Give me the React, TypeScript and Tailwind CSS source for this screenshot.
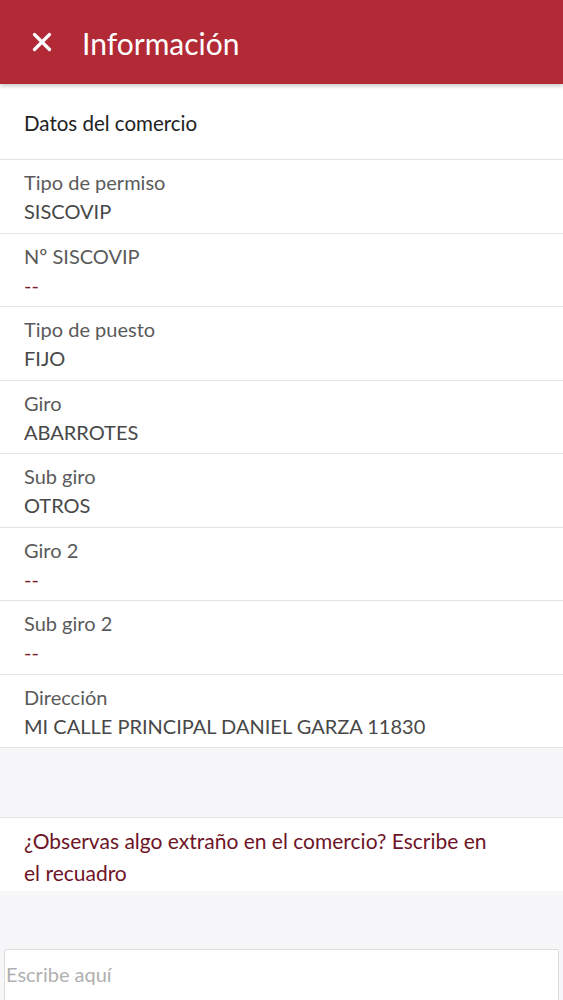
import { X } from "lucide-react";

const rows = [
  { label: "Tipo de permiso", value: "SISCOVIP" },
  { label: "Nº SISCOVIP", value: "--" },
  { label: "Tipo de puesto", value: "FIJO" },
  { label: "Giro", value: "ABARROTES" },
  { label: "Sub giro", value: "OTROS" },
  { label: "Giro 2", value: "--" },
  { label: "Sub giro 2", value: "--" },
  { label: "Dirección", value: "MI CALLE PRINCIPAL DANIEL GARZA 11830" },
];

export default function App() {
  return (
    <div className="w-[563px] h-[1000px] overflow-hidden bg-[#f7f7f9] font-['Lato',sans-serif]">
      {/* Header */}
      <div className="relative z-10 h-[84px] bg-[#b12a36] flex items-center shadow-[0_2px_4px_rgba(0,0,0,0.22)]">
        <X className="ml-[27px] w-[30px] h-[30px] text-white" strokeWidth={2.6} />
        <h1 className="ml-[25px] pt-[2px] text-[30px] text-white">Información</h1>
      </div>

      {/* Section title */}
      <div className="bg-white h-[76px] flex items-center px-6 pt-[4px] border-b border-[#e4e4e6]">
        <p className="text-[20.5px] text-[#222]">Datos del comercio</p>
      </div>

      {/* Rows */}
      <div className="bg-white">
        {rows.map((r) => (
          <div key={r.label} className="h-[73.5px] px-6 pt-[8px] border-b border-[#e4e4e6]">
            <p className="text-[20px] leading-[28px] text-[#5a5a5a]">{r.label}</p>
            <p
              className={
                r.value === "--"
                  ? "text-[20px] leading-[30px] text-[#7a1b2c]"
                  : "text-[20px] leading-[30px] text-[#484848]"
              }
            >
              {r.value}
            </p>
          </div>
        ))}
      </div>

      {/* Spacer */}
      <div className="h-[70px] border-b border-[#e4e4e6]" />

      {/* Question */}
      <div className="bg-white pl-6 pr-[70px] pt-[7px] h-[73px]">
        <p className="text-[21px] leading-[32px] text-[#6e1427]">
          ¿Observas algo extraño en el comercio? Escribe en el recuadro
        </p>
      </div>

      {/* Input */}
      <div className="pt-[58px] px-1">
        <div className="h-[60px] bg-white border border-[#dcdcdc] rounded-[2px]">
          <p className="pl-px pt-[9px] text-[20px] text-[#b0b0b0]">Escribe aquí</p>
        </div>
      </div>
    </div>
  );
}
